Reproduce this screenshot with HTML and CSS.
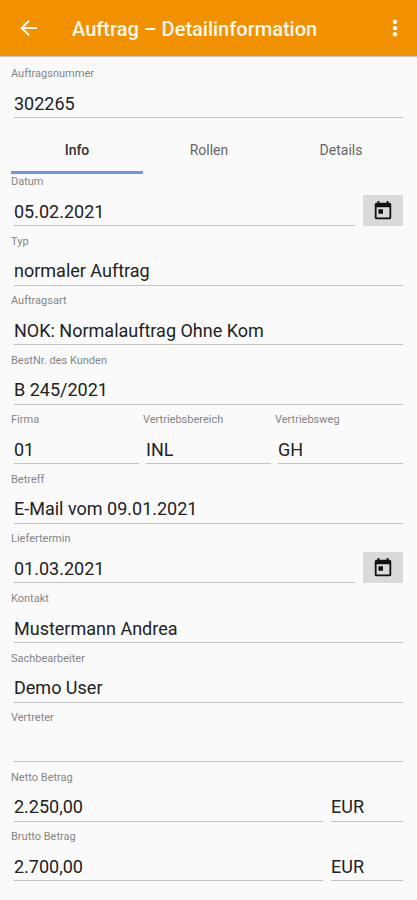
FILE: index.html
```html
<!DOCTYPE html>
<html lang="de">
<head>
<meta charset="utf-8">
<meta name="viewport" content="width=device-width, initial-scale=1">
<title>Auftrag – Detailinformation</title>
<link rel="stylesheet" href="styles.css">
</head>
<body>
<header class="bar">
  <button class="icon-button" type="button" aria-label="Zurück">
    <svg width="24" height="24" viewBox="0 0 24 24" fill="none" stroke="currentColor" stroke-width="2"><path d="M20 12H5.500M12 4.700L4.700 12l7.300 7.300"/></svg>
  </button>
  <h1 class="title">Auftrag – Detailinformation</h1>
  <button class="icon-button menu" type="button" aria-label="Menü">
    <svg width="24" height="24" viewBox="0 0 24 24" fill="currentColor"><circle cx="12" cy="5.700" r="2.300"/><circle cx="12" cy="12" r="2.300"/><circle cx="12" cy="18.300" r="2.300"/></svg>
  </button>
</header>
<main class="page">
  <div class="field">
    <label for="nr">Auftragsnummer</label>
    <div class="line"><input id="nr" type="text" value="302265"></div>
  </div>
  <nav class="tabs">
    <button class="tab active" type="button">Info</button>
    <button class="tab" type="button">Rollen</button>
    <button class="tab" type="button">Details</button>
  </nav>
  <form class="form">
    <div class="field">
      <label for="datum">Datum</label>
      <div class="line">
        <input id="datum" type="text" value="05.02.2021">
        <button class="pick" type="button" aria-label="Datum wählen"><svg width="22" height="22" viewBox="0 0 24 24" fill="currentColor"><path fill-rule="evenodd" d="M19 3h-1V1h-2v2H8V1H6v2H5a2 2 0 0 0-2 2v14a2 2 0 0 0 2 2h14a2 2 0 0 0 2-2V5a2 2 0 0 0-2-2zm0 16H5V8h14zM7 10h5v5H7z"/></svg></button>
      </div>
    </div>
    <div class="field">
      <label for="typ">Typ</label>
      <div class="line"><input id="typ" type="text" value="normaler Auftrag"></div>
    </div>
    <div class="field">
      <label for="art">Auftragsart</label>
      <div class="line"><input id="art" type="text" value="NOK: Normalauftrag Ohne Kom"></div>
    </div>
    <div class="field">
      <label for="best">BestNr. des Kunden</label>
      <div class="line"><input id="best" type="text" value="B 245/2021"></div>
    </div>
    <div class="columns">
      <div class="field">
        <label for="firma">Firma</label>
        <div class="line"><input id="firma" type="text" value="01"></div>
      </div>
      <div class="field">
        <label for="bereich">Vertriebsbereich</label>
        <div class="line"><input id="bereich" type="text" value="INL"></div>
      </div>
      <div class="field">
        <label for="weg">Vertriebsweg</label>
        <div class="line"><input id="weg" type="text" value="GH"></div>
      </div>
    </div>
    <div class="field">
      <label for="betreff">Betreff</label>
      <div class="line"><input id="betreff" type="text" value="E-Mail vom 09.01.2021"></div>
    </div>
    <div class="field">
      <label for="termin">Liefertermin</label>
      <div class="line">
        <input id="termin" type="text" value="01.03.2021">
        <button class="pick" type="button" aria-label="Liefertermin wählen"><svg width="22" height="22" viewBox="0 0 24 24" fill="currentColor"><path fill-rule="evenodd" d="M19 3h-1V1h-2v2H8V1H6v2H5a2 2 0 0 0-2 2v14a2 2 0 0 0 2 2h14a2 2 0 0 0 2-2V5a2 2 0 0 0-2-2zm0 16H5V8h14zM7 10h5v5H7z"/></svg></button>
      </div>
    </div>
    <div class="field">
      <label for="kontakt">Kontakt</label>
      <div class="line"><input id="kontakt" type="text" value="Mustermann Andrea"></div>
    </div>
    <div class="field">
      <label for="sach">Sachbearbeiter</label>
      <div class="line"><input id="sach" type="text" value="Demo User"></div>
    </div>
    <div class="field">
      <label for="vertreter">Vertreter</label>
      <div class="line"><input id="vertreter" type="text" value=""></div>
    </div>
    <div class="field">
      <label for="netto">Netto Betrag</label>
      <div class="line">
        <input id="netto" type="text" value="2.250,00">
        <input class="currency" type="text" value="EUR" aria-label="Währung Netto">
      </div>
    </div>
    <div class="field">
      <label for="brutto">Brutto Betrag</label>
      <div class="line">
        <input id="brutto" type="text" value="2.700,00">
        <input class="currency" type="text" value="EUR" aria-label="Währung Brutto">
      </div>
    </div>
  </form>
</main>
</body>
</html>
```
FILE: styles.css
```css
* {
  box-sizing: border-box;
}

body {
  margin: 0;
  min-height: 100vh;
  display: flex;
  flex-direction: column;
  background: #fafafa;
  color: #222;
  font-family: Roboto, "Liberation Sans", sans-serif;
}

button,
input {
  margin: 0;
  padding: 0;
  border: 0;
  border-radius: 0;
  background: none;
  color: inherit;
  font: inherit;
}

svg {
  display: block;
}

.bar {
  display: flex;
  align-items: center;
  height: 56px;
  padding: 0 10px 0 17px;
  background: #f29100;
  color: #fff8ec;
  box-shadow: 0 1px 1px rgba(0, 0, 0, 0.2);
}

.title {
  flex: 1;
  margin: 0 0 0 31px;
  font-size: 20px;
  font-weight: 500;
  line-height: 24px;
  padding-top: 2px;
}

.icon-button {
  flex: none;
}

.page {
  flex: 1;
  display: flex;
  flex-direction: column;
  padding: 11px 10px 10px 11px;
}

.field label {
  display: block;
  font-size: 11px;
  line-height: 14px;
  color: #858585;
}

.line {
  display: flex;
  align-items: flex-end;
  gap: 8px;
  margin: 0 4px 0 3px;
}

.line input {
  flex: 1;
  min-width: 0;
  height: 37px;
  padding-top: 8px;
  border-bottom: 1px solid #c4c4c4;
  font-size: 18px;
  outline: 0;
}

.line .currency {
  flex: none;
  width: 72px;
}

.pick {
  flex: none;
  display: grid;
  place-items: center;
  width: 40px;
  height: 31px;
  background: #d9dbda;
  border-radius: 1px;
  color: #111;
}

.tabs {
  display: grid;
  grid-template-columns: repeat(3, 1fr);
  margin: 10px 0 1px;
}

.tab {
  height: 46px;
  border-bottom: 3px solid transparent;
  font-size: 14px;
  color: #666;
}

.tab.active {
  border-color: #6f95e3;
  font-weight: 500;
  color: #333;
}

.form {
  flex: 1;
  display: grid;
  grid-template-columns: minmax(0, 1fr);
  grid-auto-rows: 1fr;
}

.columns {
  display: grid;
  grid-template-columns: repeat(3, minmax(0, 1fr));
}
```
